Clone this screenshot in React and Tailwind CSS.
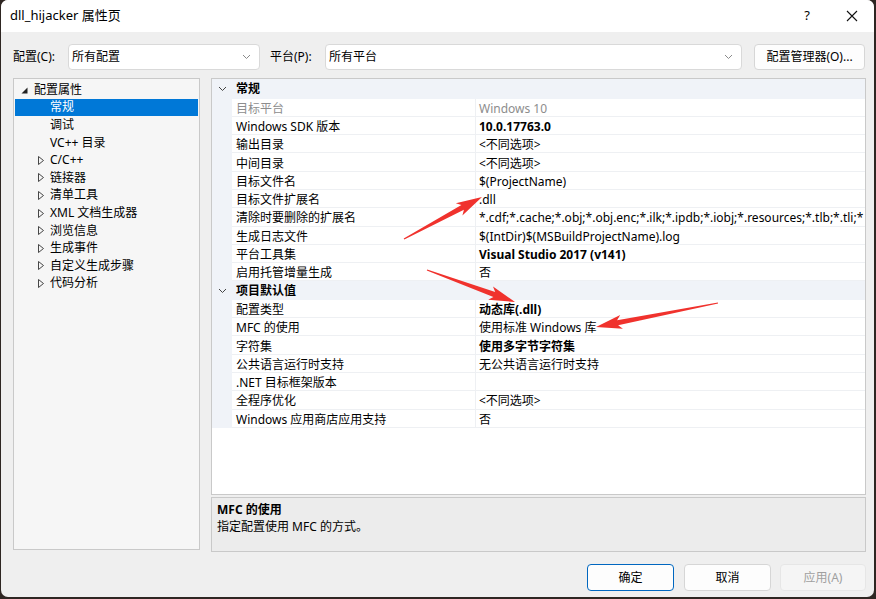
import React from "react";

const FONT = { fontFamily: '"Noto Sans", "Noto Sans CJK SC", sans-serif' };

function arrowPoints(x1, y1, x2, y2, head = 22, hw = 7, tailW = 0.6, baseW = 2.6) {
  const dx = x2 - x1, dy = y2 - y1;
  const len = Math.hypot(dx, dy);
  const ux = dx / len, uy = dy / len;
  const nx = -uy, ny = ux;
  const bx = x2 - ux * head, by = y2 - uy * head;
  const wx = x2 - ux * (head + 4), wy = y2 - uy * (head + 4);
  const pts = [
    [x1 + nx * tailW, y1 + ny * tailW],
    [bx + nx * baseW, by + ny * baseW],
    [wx + nx * hw, wy + ny * hw],
    [x2, y2],
    [wx - nx * hw, wy - ny * hw],
    [bx - nx * baseW, by - ny * baseW],
    [x1 - nx * tailW, y1 - ny * tailW],
  ];
  return pts.map((p) => p.map((v) => v.toFixed(1)).join(",")).join(" ");
}

function Chevron({ className = "" }) {
  return (
    <svg width="9" height="6" viewBox="0 0 9 6" className={className}>
      <path d="M1 1 L4.5 4.5 L8 1" fill="none" stroke="currentColor" strokeWidth="1" />
    </svg>
  );
}

function Select({ value, className }) {
  return (
    <div className={`h-[26px] bg-white border border-[#d9d9d9] rounded-[4px] flex items-center justify-between pl-[3px] pr-[8px] ${className}`}>
      <span className="text-[12px] text-black">{value}</span>
      <Chevron className="text-[#8a8a8a]" />
    </div>
  );
}

const tree = [
  { t: "配置属性", lvl: 0, exp: true },
  { t: "常规", lvl: 1, sel: true },
  { t: "调试", lvl: 1 },
  { t: "VC++ 目录", lvl: 1 },
  { t: "C/C++", lvl: 1, col: true },
  { t: "链接器", lvl: 1, col: true },
  { t: "清单工具", lvl: 1, col: true },
  { t: "XML 文档生成器", lvl: 1, col: true },
  { t: "浏览信息", lvl: 1, col: true },
  { t: "生成事件", lvl: 1, col: true },
  { t: "自定义生成步骤", lvl: 1, col: true },
  { t: "代码分析", lvl: 1, col: true },
];

const groups = [
  {
    name: "常规",
    first: true,
    rows: [
      ["目标平台", "Windows 10", "dis"],
      ["Windows SDK 版本", "10.0.17763.0", "bold"],
      ["输出目录", "<不同选项>"],
      ["中间目录", "<不同选项>"],
      ["目标文件名", "$(ProjectName)"],
      ["目标文件扩展名", ".dll"],
      ["清除时要删除的扩展名", "*.cdf;*.cache;*.obj;*.obj.enc;*.ilk;*.ipdb;*.iobj;*.resources;*.tlb;*.tli;*"],
      ["生成日志文件", "$(IntDir)$(MSBuildProjectName).log"],
      ["平台工具集", "Visual Studio 2017 (v141)", "bold"],
      ["启用托管增量生成", "否"],
    ],
  },
  {
    name: "项目默认值",
    rows: [
      ["配置类型", "动态库(.dll)", "bold"],
      ["MFC 的使用", "使用标准 Windows 库"],
      ["字符集", "使用多字节字符集", "bold"],
      ["公共语言运行时支持", "无公共语言运行时支持"],
      [".NET 目标框架版本", ""],
      ["全程序优化", "<不同选项>"],
      ["Windows 应用商店应用支持", "否"],
    ],
  },
];

export default function App() {
  return (
    <div className="w-[876px] h-[599px] bg-[#2e2622] overflow-hidden relative" style={FONT}>
      <div className="absolute left-[1px] top-0 w-[873px] h-[597px] bg-[#efefef] rounded-[7px] overflow-hidden flex flex-col">
        {/* title bar */}
        <div className="h-[32px] bg-white flex items-center shrink-0">
          <span className="ml-[9px] text-[13px] text-black">dll_hijacker 属性页</span>
          <div className="flex-1" />
          <span className="text-[13px] text-black mr-[36px]">?</span>
          <svg width="12" height="12" viewBox="0 0 12 12" className="mr-[16px]">
            <path d="M1 1 L11 11 M11 1 L1 11" stroke="#111" strokeWidth="1.1" />
          </svg>
        </div>

        {/* config row */}
        <div className="flex items-center mt-[12px] h-[26px] pl-[12px] text-[12px] text-black">
          <span className="w-[55px]">配置(C):</span>
          <Select value="所有配置" className="w-[192px]" />
          <span className="ml-[10px] w-[55px]">平台(P):</span>
          <Select value="所有平台" className="w-[417px]" />
          <div className="ml-[12px] w-[111px] h-[26px] bg-[#fdfdfd] border border-[#d6d6d6] rounded-[4px] flex items-center justify-center">
            配置管理器(O)...
          </div>
        </div>

        {/* main area */}
        <div className="flex mt-[8px] pl-[12px]">
          {/* tree */}
          <div className="w-[187px] h-[472px] bg-[#f6f6f6] border border-[#c9c9c9] pt-[2px]">
            {tree.map((it, i) => (
              <div
                key={i}
                className={`h-[17.6px] flex items-center text-[12px] relative ${it.sel ? "bg-[#0078d7] text-white mx-[1px]" : "text-black"}`}
              >
                {it.exp && (
                  <svg width="7" height="7" viewBox="0 0 7 7" className="absolute left-[7px] top-[6px]">
                    <path d="M6.5 0.5 L6.5 6.5 L0.5 6.5 Z" fill="#222" />
                  </svg>
                )}
                {it.col && (
                  <svg width="6" height="9" viewBox="0 0 6 9" className="absolute left-[24px] top-[4.5px]">
                    <path d="M0.5 0.5 L5.5 4.5 L0.5 8.5 Z" fill="none" stroke="#333" strokeWidth="0.9" />
                  </svg>
                )}
                <span className={it.lvl === 0 ? "ml-[20px]" : it.sel ? "ml-[35px]" : "ml-[36px]"}>{it.t}</span>
              </div>
            ))}
          </div>

          {/* right column */}
          <div className="ml-[11px] w-[655px] flex flex-col">
            <div className="h-[417px] bg-white border border-[#c9c9c9] overflow-hidden">
              {groups.map((g, gi) => (
                <div key={gi}>
                  <div className={`${g.first ? "h-[19.5px]" : "h-[18.3px]"} bg-[#f0f3f8] flex items-center text-[12px] font-bold text-black relative`}>
                    <Chevron className="absolute left-[6px] top-[7px] text-[#444]" />
                    <span className="ml-[24px]">{g.name}</span>
                  </div>
                  {g.rows.map((r, ri) => (
                    <div key={ri} className="h-[18.3px] flex text-[12px]">
                      <div className="w-[20px] bg-[#f0f3f8] shrink-0" />
                      <div className={`w-[244px] shrink-0 border-b border-r border-[#eef0f3] flex items-center pt-[3px] pl-[4px] ${r[2] === "dis" ? "text-[#8d8d8d]" : "text-black"}`}>
                        {r[0]}
                      </div>
                      <div className={`flex-1 min-w-0 border-b border-[#eef0f3] flex items-center pt-[3px] pl-[3px] whitespace-nowrap overflow-hidden ${r[2] === "dis" ? "text-[#8d8d8d]" : "text-black"} ${r[2] === "bold" ? "font-bold" : ""}`}>
                        {r[1]}
                      </div>
                    </div>
                  ))}
                </div>
              ))}
            </div>
            <div className="mt-[2px] h-[55px] bg-[#ececec] border border-[#c9c9c9] pl-[5px] pt-[3px] text-[12px] text-black leading-[17px]">
              <div className="font-bold">MFC 的使用</div>
              <div>指定配置使用 MFC 的方式。</div>
            </div>
          </div>
        </div>

        {/* buttons */}
        <div className="flex mt-[12px] pl-[586px] text-[12px]">
          <div className="w-[87px] h-[27px] bg-[#fdfdfd] border border-[#0067c0] rounded-[4px] flex items-center justify-center text-black">确定</div>
          <div className="ml-[10px] w-[87px] h-[27px] bg-[#fdfdfd] border border-[#d6d6d6] rounded-[4px] flex items-center justify-center text-black">取消</div>
          <div className="ml-[9px] w-[86px] h-[27px] bg-[#f5f5f5] border border-[#e6e6e6] rounded-[4px] flex items-center justify-center text-[#a0a0a0]">应用(A)</div>
        </div>
      </div>

      {/* red annotation arrows */}
      <svg className="absolute left-0 top-0 pointer-events-none" width="876" height="599">
        <polygon points={arrowPoints(404, 239, 482, 197)} fill="#f0322d" />
        <polygon points={arrowPoints(427, 270, 515, 302)} fill="#f0322d" />
        <polygon points={arrowPoints(718, 303, 596, 327)} fill="#f0322d" />
      </svg>
    </div>
  );
}
